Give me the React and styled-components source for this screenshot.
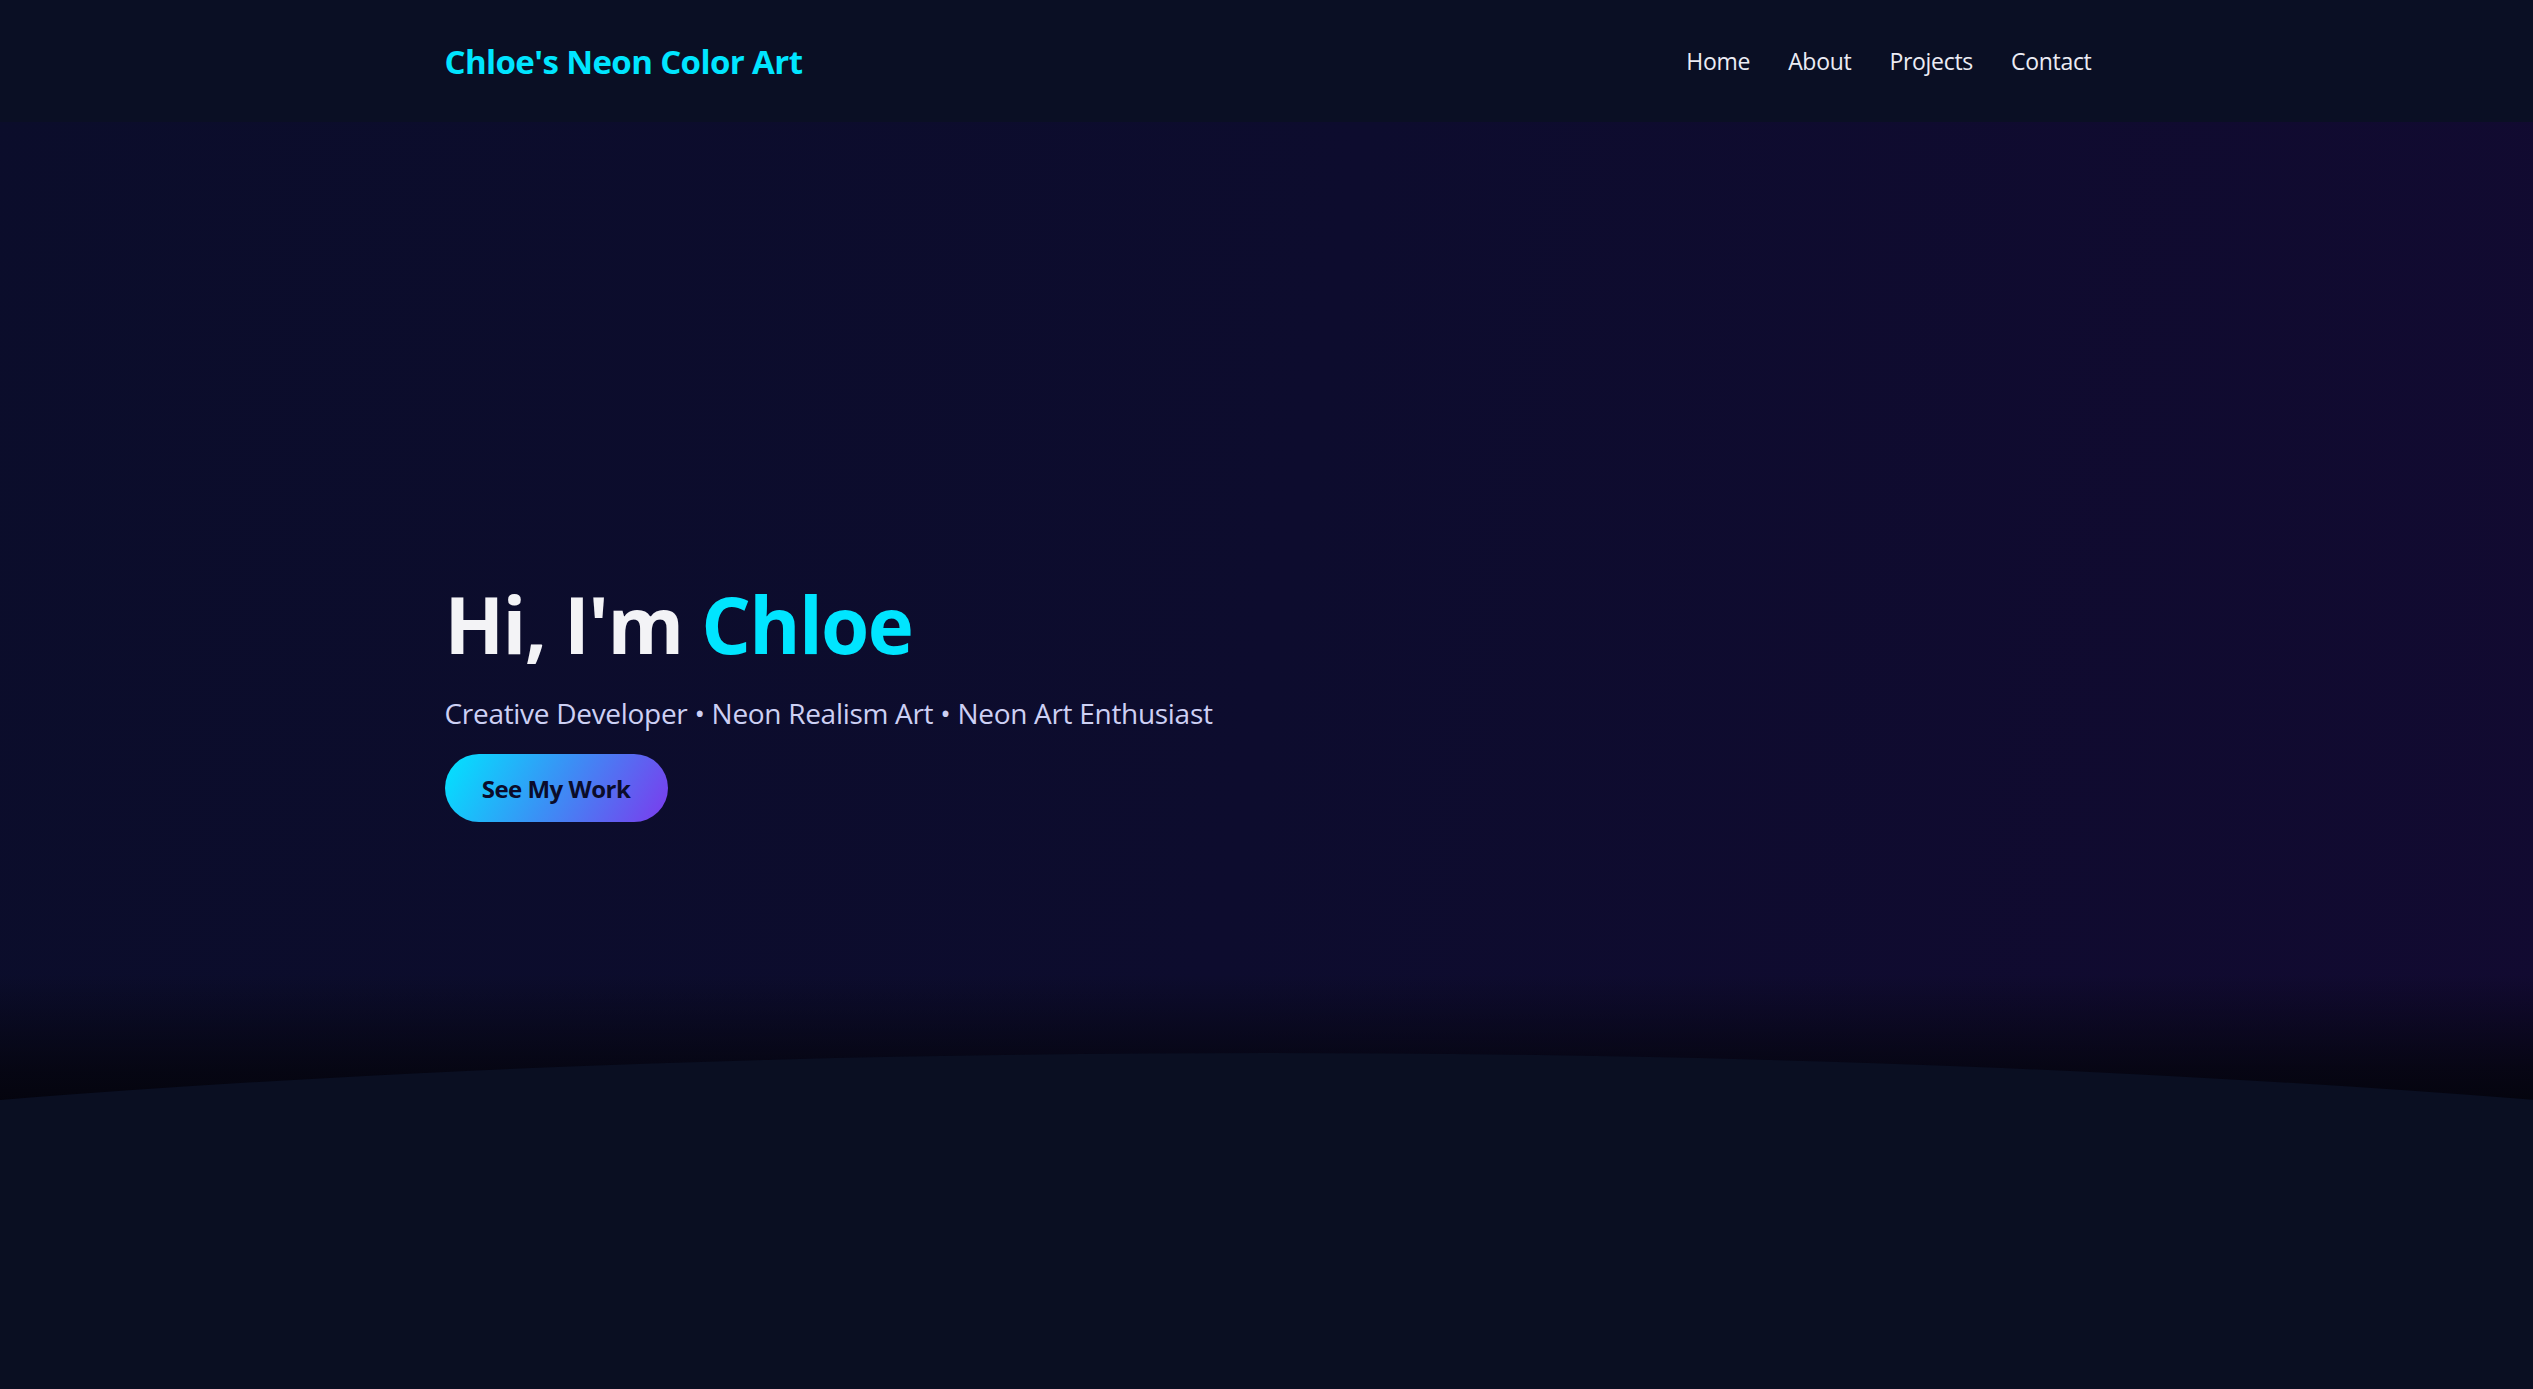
import React from 'react'
import styled, { createGlobalStyle } from 'styled-components'

const GlobalStyle = createGlobalStyle`
  * { box-sizing: border-box; }
  html, body {
    margin: 0;
    padding: 0;
    background: #0a0f22;
    font-family: "Open Sans", "Noto Sans", sans-serif;
    color: #f2f2f7;
  }
`

const Header = styled.header`
  position: fixed;
  top: 0;
  left: 0;
  right: 0;
  height: 122px;
  background: #0a0f24;
  z-index: 10;
`

const Container = styled.div`
  width: 1650px;
  max-width: 100%;
  margin: 0 auto;
  padding-left: 3px;
  height: 100%;
`

const HeaderInner = styled(Container)`
  display: flex;
  align-items: center;
  justify-content: space-between;
`

const Logo = styled.a`
  color: #00e5ff;
  font-size: 33px;
  font-weight: 700;
  letter-spacing: -0.6px;
  text-decoration: none;
`

const Nav = styled.nav`
  display: flex;
  gap: 38px;
`

const NavLink = styled.a`
  color: #ececf4;
  font-size: 23px;
  text-decoration: none;
  letter-spacing: -0.3px;
`

const Hero = styled.section`
  position: relative;
  height: 100vh;
  min-height: 1389px;
  display: flex;
  align-items: center;
  background: linear-gradient(100deg, #0b0d2b 0%, #0d0c2e 50%, #120a31 100%);
  overflow: hidden;
`

const HeroContent = styled(Container)`
  height: auto;
  position: relative;
  z-index: 2;
  margin-top: 15px;
`

const Title = styled.h1`
  margin: 0;
  font-size: 78px;
  font-weight: 700;
  line-height: 1.1;
  letter-spacing: -1.6px;
  color: #f3f3f6;
`

const Accent = styled.span`
  color: #00e5ff;
`

const Subtitle = styled.p`
  margin: 27px 0 0;
  font-size: 28px;
  line-height: 1.3;
  letter-spacing: -0.3px;
  color: #cdd0f4;
`

const CtaButton = styled.a`
  display: inline-flex;
  align-items: center;
  justify-content: center;
  margin-top: 23px;
  height: 68px;
  width: 223px;
  border-radius: 34px;
  background: linear-gradient(120deg, #00e5ff 0%, #3b8ff5 50%, #7c3aed 100%);
  color: #0b0c2a;
  font-size: 24px;
  font-weight: 700;
  letter-spacing: -0.5px;
  text-decoration: none;
`

const Fade = styled.div`
  position: absolute;
  left: 0;
  right: 0;
  top: 975px;
  height: 135px;
  background: linear-gradient(180deg, rgba(5, 5, 15, 0) 0%, rgba(5, 5, 15, 0.85) 70%, #04040d 100%);
  z-index: 1;
`

const Curve = styled.div`
  position: absolute;
  left: -50%;
  width: 200%;
  top: 1053px;
  height: 700px;
  border-radius: 50%;
  background: #0a0f22;
  z-index: 1;
`

export default function App() {
  return (
    <>
      <GlobalStyle />
      <Header>
        <HeaderInner>
          <Logo href="#">Chloe's Neon Color Art</Logo>
          <Nav>
            <NavLink href="#">Home</NavLink>
            <NavLink href="#">About</NavLink>
            <NavLink href="#">Projects</NavLink>
            <NavLink href="#">Contact</NavLink>
          </Nav>
        </HeaderInner>
      </Header>
      <Hero>
        <HeroContent>
          <Title>
            Hi, I'm <Accent>Chloe</Accent>
          </Title>
          <Subtitle>Creative Developer • Neon Realism Art • Neon Art Enthusiast</Subtitle>
          <CtaButton href="#">See My Work</CtaButton>
        </HeroContent>
        <Fade />
        <Curve />
      </Hero>
    </>
  )
}
